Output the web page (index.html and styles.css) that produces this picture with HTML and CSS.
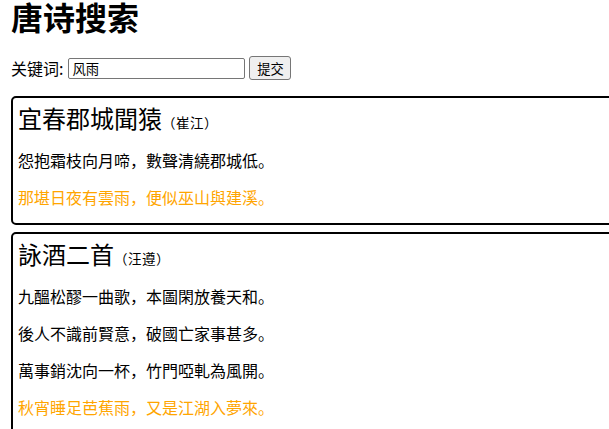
FILE: index.html
```html
<!DOCTYPE html>
<html lang="zh">
<head>
<meta charset="utf-8">
<title>唐诗搜索</title>
<link rel="stylesheet" href="styles.css">
</head>
<body>
<main class="page">
  <h1 class="page-title">唐诗搜索</h1>
  <form class="search">
    <label class="search-label" for="kw">关键词:</label>
    <input class="search-input" id="kw" type="text" value="风雨">
    <button class="search-button" type="button">提交</button>
  </form>
  <section class="results">
    <article class="poem">
      <h2 class="poem-title">宜春郡城聞猿<span class="poem-author">（崔江）</span></h2>
      <p class="line">怨抱霜枝向月啼，數聲清繞郡城低。</p>
      <p class="line hit">那堪日夜有雲雨，便似巫山與建溪。</p>
    </article>
    <article class="poem">
      <h2 class="poem-title">詠酒二首<span class="poem-author">（汪遵）</span></h2>
      <p class="line">九醞松醪一曲歌，本圖閑放養天和。</p>
      <p class="line">後人不識前賢意，破國亡家事甚多。</p>
      <p class="line">萬事銷沈向一杯，竹門啞軋為風開。</p>
      <p class="line hit">秋宵睡足芭蕉雨，又是江湖入夢來。</p>
    </article>
  </section>
</main>
</body>
</html>
```

FILE: styles.css
```css
html, body {
  margin: 0;
  overflow: hidden;
}

body {
  font-family: "Noto Sans CJK SC", "Noto Sans CJK TC", sans-serif;
  color: #000;
  background: #fff;
}

.page {
  padding-left: 11px;
}

.page-title {
  margin: 0 0 24px;
  font-size: 32px;
  line-height: 32px;
  font-weight: bold;
}

.search {
  display: flex;
  align-items: center;
  height: 24px;
  margin: 0 0 16px;
}

.search-label {
  font-size: 16px;
  line-height: 24px;
  margin-right: 5px;
}

.search-input {
  box-sizing: border-box;
  width: 177px;
  height: 21px;
  margin: 0;
  padding: 0 3px;
  border: 1px solid #767676;
  border-radius: 2px;
  font-family: inherit;
  font-size: 13.33px;
  color: #000;
}

.search-button {
  box-sizing: border-box;
  width: 42px;
  height: 24px;
  margin: 0 0 0 4px;
  padding: 0;
  border: 1px solid #767676;
  border-radius: 3px;
  background: #efefef;
  font-family: inherit;
  font-size: 13.33px;
  color: #000;
}

.poem {
  width: 100%;
  border: 2px solid #000;
  border-radius: 5px;
  padding: 4px 5px 0;
  margin-bottom: 7px;
}

.poem-title {
  margin: 0;
  font-size: 24px;
  line-height: 32px;
  font-weight: normal;
}

.poem-author {
  font-family: "Noto Sans CJK TC", "Noto Sans CJK SC", sans-serif;
  font-size: 13.5px;
  line-height: 14px;
  text-spacing-trim: space-all;
  letter-spacing: 0.5px;
}

.line {
  margin: 15px 0;
  font-size: 16px;
  line-height: 22px;
}

.hit {
  color: #ffa500;
}
```
